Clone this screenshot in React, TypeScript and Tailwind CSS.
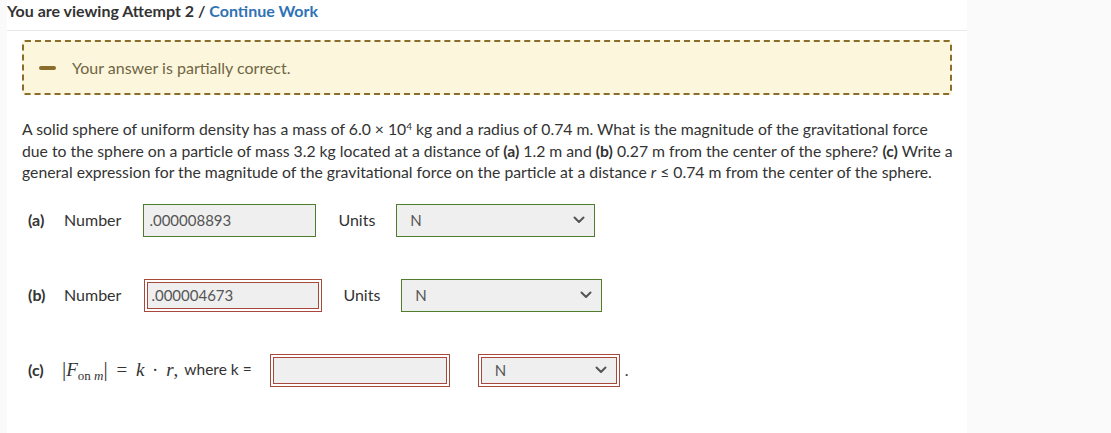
import React from "react";

const lato = { fontFamily: "Lato, 'Open Sans', sans-serif" };

function Chevron() {
  return (
    <svg width="12" height="8" viewBox="0 0 12 8" fill="none" className="shrink-0">
      <path d="M1.5 1.5 L6 6 L10.5 1.5" stroke="#555" strokeWidth="2" strokeLinecap="round" strokeLinejoin="round" />
    </svg>
  );
}

function Box({ children, tone, width }: { children?: React.ReactNode; tone: "green" | "red"; width: string }) {
  if (tone === "green") {
    return (
      <div className={`${width} h-[33px] border border-[#4f7d2c] bg-[#efefef] flex items-center`}>{children}</div>
    );
  }
  return (
    <div className="border border-[#a8473c] p-[2px] bg-white">
      <div className={`${width} h-[27px] border border-[#a8473c] bg-[#efefef] flex items-center`}>{children}</div>
    </div>
  );
}

function UnitSelect({ tone, width }: { tone: "green" | "red"; width: string }) {
  return (
    <Box tone={tone} width={width}>
      <span className="pl-[13px] text-[15px] text-[#555]">N</span>
      <span className="ml-auto pr-[9px] flex">
        <Chevron />
      </span>
    </Box>
  );
}

export default function App() {
  return (
    <div className="min-h-[433px] bg-[#fafafa] pl-[7px] text-[#333]" style={lato}>
      <div className="w-[960px] min-h-[433px] bg-white">
        <div className="h-[31px] border-b border-[#e8e8e8] text-[16px] font-bold leading-[22px]">
          You are viewing Attempt 2 / <span className="text-[#2f72b5]">Continue Work</span>
        </div>

        <div className="px-[15px]">
          <div className="mt-[9px] h-[55px] border-2 border-dashed border-[#8a6d2b] rounded-[3px] bg-[#fcf6dd] flex items-center">
            <span className="ml-[15px] w-[17px] h-[4px] rounded-full bg-[#8a6d2b]" />
            <span className="ml-[16px] text-[16px] text-[#6f6543]">Your answer is partially correct.</span>
          </div>

          <p className="mt-[23px] w-[945px] text-[15.75px] leading-[21.5px]">
            A solid sphere of uniform density has a mass of 6.0 × 10<sup className="text-[10px]">4</sup> kg and a radius of 0.74 m. What is the magnitude of the gravitational force
            <br />
            due to the sphere on a particle of mass 3.2 kg located at a distance of <b>(a)</b> 1.2 m and <b>(b)</b> 0.27 m from the center of the sphere? <b>(c)</b> Write a
            <br />
            general expression for the magnitude of the gravitational force on the particle at a distance <i>r</i> ≤ 0.74 m from the center of the sphere.
          </p>

          <div className="mt-[21px] pl-[6px] flex items-center text-[16px]">
            <span className="w-[36px] font-bold">(a)</span>
            <span>Number</span>
            <div className="ml-[22px]">
              <Box tone="green" width="w-[173px]">
                <span className="pl-[5px] text-[15px] text-[#555]">.000008893</span>
              </Box>
            </div>
            <span className="ml-[22px]">Units</span>
            <div className="ml-[21px]">
              <UnitSelect tone="green" width="w-[199px]" />
            </div>
          </div>

          <div className="mt-[42px] pl-[6px] flex items-center text-[16px]">
            <span className="w-[36px] font-bold">(b)</span>
            <span>Number</span>
            <div className="ml-[23px]">
              <Box tone="red" width="w-[172px]">
                <span className="pl-[3px] text-[15px] text-[#555]">.000004673</span>
              </Box>
            </div>
            <span className="ml-[21px]">Units</span>
            <div className="ml-[21px]">
              <UnitSelect tone="green" width="w-[201px]" />
            </div>
          </div>

          <div className="mt-[42px] pl-[6px] flex items-center text-[16px]">
            <span className="w-[34px] font-bold">(c)</span>
            <span className="text-[19px] whitespace-nowrap" style={{ fontFamily: "'Liberation Serif', serif" }}>
              <span className="text-[21px]">|</span><i>F</i>
              <sub className="text-[13px]">
                on <i>m</i>
              </sub>
              <span className="text-[21px]">|</span> <span className="mx-[4px]">=</span> <i>k</i> <span className="mx-[3px]">·</span> <i>r</i>,
            </span>
            <span className="ml-[6px] text-[15.5px]">where k =</span>
            <div className="ml-[18px]">
              <Box tone="red" width="w-[174px]" />
            </div>
            <div className="ml-[28px]">
              <UnitSelect tone="red" width="w-[136px]" />
            </div>
            <span className="ml-[5px]">.</span>
          </div>
        </div>
      </div>
    </div>
  );
}
